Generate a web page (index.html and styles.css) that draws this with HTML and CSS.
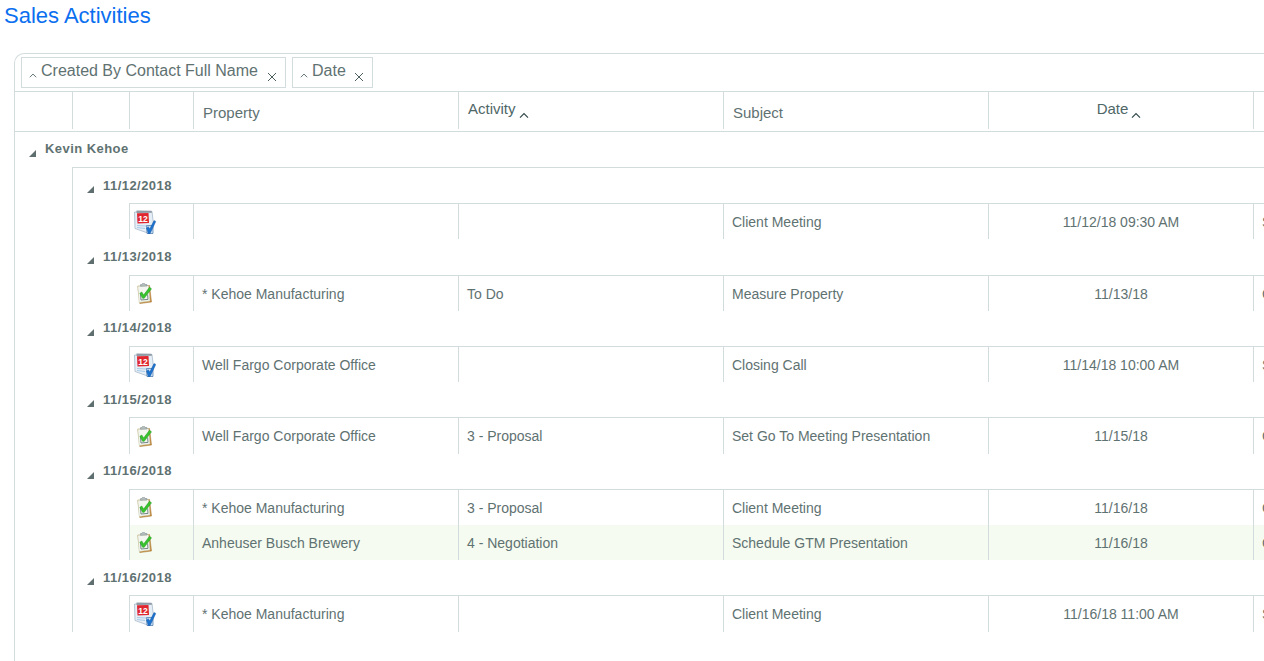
FILE: index.html
```html
<!DOCTYPE html>
<html lang="en">
<head>
<meta charset="utf-8">
<title>Sales Activities</title>
<link rel="stylesheet" href="styles.css">
</head>
<body>
<svg class="defs" width="0" height="0" aria-hidden="true">
  <symbol id="chev" viewBox="0 0 10 6"><path d="M1 5.200 5 1.200l4 4" fill="none" stroke="currentColor" stroke-width="1.200"/></symbol>
  <symbol id="close" viewBox="0 0 10 10"><path d="M1 1l8 8M9 1 1 9" fill="none" stroke="currentColor" stroke-width="1"/></symbol>
  <symbol id="tri" viewBox="0 0 7 7"><path d="M7 0v7H0z" fill="#5f6f6f"/></symbol>
  <symbol id="cal" viewBox="0 0 22 24">
    <path d="M.5 2 18 1.500l1.500 12.500L15 23.500 1 18.500z" fill="#e6eef6" stroke="#9fb2c6" stroke-width=".7"/>
    <path d="M2.500.6 17.500.8 18 2.800 2.500 3z" fill="#8f9aa4"/>
    <path d="M3 3.300 14.500 3l.5 10-11.500.5z" fill="#e0262e"/>
    <text x="9" y="11.600" class="cal-num" text-anchor="middle">12</text>
    <path d="M3 15.500l9 .5M3 17.500l8 1" stroke="#a8cbe8" stroke-width="1"/>
    <path d="M12.500 15.500h6.500v8H13z" fill="#cfe3f5" stroke="#2a5f9e" stroke-width=".6"/>
    <path d="m12.500 18 1.800-1.300 1.400 2.300L20 10.500l1.800.9L16 23.800h-1.600z" fill="#1d74cf" stroke="#124f99" stroke-width=".4"/>
  </symbol>
  <symbol id="clip" viewBox="0 0 15 21">
    <path d="M.8 3.200 12.500 2.500 14.500 19 2.800 20.600z" fill="#c2893a" stroke="#a6752c" stroke-width=".5"/>
    <path d="M.8 3.200 11.500 2.700 13 18 2.200 19.500z" fill="#f3f6ee" stroke="#c9cfb5" stroke-width=".5"/>
    <path d="M3.500 3.300 10 3V1.500H8L7.500.4H5.500L5 1.600H3.500z" fill="#b6c0bd" stroke="#76848a" stroke-width=".5"/>
    <path d="M3.500 11 4 17l7-.6-.4-5" fill="none" stroke="#75868a" stroke-width="1"/>
    <path d="m2.800 10.300 2-1.300L6.600 12 12.500 4.300 14.500 5.800 7.200 15.300H5.600z" fill="#37c22e" stroke="#1d9a1a" stroke-width=".5"/>
  </symbol>
</svg>

<h1 class="title">Sales Activities</h1>

<div class="panel">
  <div class="groupbar">
    <div class="chip">
      <svg class="chip-caret"><use href="#chev"/></svg>
      <span class="chip-label">Created By Contact Full Name</span>
      <svg class="chip-x"><use href="#close"/></svg>
    </div>
    <div class="chip">
      <svg class="chip-caret"><use href="#chev"/></svg>
      <span class="chip-label">Date</span>
      <svg class="chip-x"><use href="#close"/></svg>
    </div>
  </div>

  <div class="head">
    <div class="hcell"></div>
    <div class="hcell"></div>
    <div class="hcell"></div>
    <div class="hcell"><span class="hlabel">Property</span></div>
    <div class="hcell sorted"><span class="hlabel">Activity</span><svg class="sort"><use href="#chev"/></svg></div>
    <div class="hcell"><span class="hlabel">Subject</span></div>
    <div class="hcell sorted center"><span class="hlabel">Date</span><svg class="sort"><use href="#chev"/></svg></div>
    <div class="hcell"></div>
  </div>

  <div class="group1"><svg class="tri"><use href="#tri"/></svg><b>Kevin Kehoe</b></div>

  <div class="nest">
    <div class="group2"><svg class="tri"><use href="#tri"/></svg><b>11/12/2018</b></div>
    <div class="rows">
      <div class="row"><div class="cell icon-cell"><svg class="cal"><use href="#cal"/></svg></div><div class="cell"></div><div class="cell"></div><div class="cell">Client Meeting</div><div class="cell center">11/12/18 09:30 AM</div><div class="cell">S</div></div>
    </div>

    <div class="group2 tall"><svg class="tri"><use href="#tri"/></svg><b>11/13/2018</b></div>
    <div class="rows">
      <div class="row"><div class="cell icon-cell"><svg class="clip"><use href="#clip"/></svg></div><div class="cell">* Kehoe Manufacturing</div><div class="cell">To Do</div><div class="cell">Measure Property</div><div class="cell center">11/13/18</div><div class="cell">C</div></div>
    </div>

    <div class="group2 up"><svg class="tri"><use href="#tri"/></svg><b>11/14/2018</b></div>
    <div class="rows">
      <div class="row"><div class="cell icon-cell"><svg class="cal"><use href="#cal"/></svg></div><div class="cell">Well Fargo Corporate Office</div><div class="cell"></div><div class="cell">Closing Call</div><div class="cell center">11/14/18 10:00 AM</div><div class="cell">S</div></div>
    </div>

    <div class="group2"><svg class="tri"><use href="#tri"/></svg><b>11/15/2018</b></div>
    <div class="rows">
      <div class="row tall"><div class="cell icon-cell"><svg class="clip"><use href="#clip"/></svg></div><div class="cell">Well Fargo Corporate Office</div><div class="cell">3 - Proposal</div><div class="cell">Set Go To Meeting Presentation</div><div class="cell center">11/15/18</div><div class="cell">C</div></div>
    </div>

    <div class="group2 up"><svg class="tri"><use href="#tri"/></svg><b>11/16/2018</b></div>
    <div class="rows">
      <div class="row"><div class="cell icon-cell"><svg class="clip"><use href="#clip"/></svg></div><div class="cell">* Kehoe Manufacturing</div><div class="cell">3 - Proposal</div><div class="cell">Client Meeting</div><div class="cell center">11/16/18</div><div class="cell">C</div></div>
      <div class="row alt"><div class="cell icon-cell"><svg class="clip"><use href="#clip"/></svg></div><div class="cell">Anheuser Busch Brewery</div><div class="cell">4 - Negotiation</div><div class="cell">Schedule GTM Presentation</div><div class="cell center">11/16/18</div><div class="cell">C</div></div>
    </div>

    <div class="group2"><svg class="tri"><use href="#tri"/></svg><b>11/16/2018</b></div>
    <div class="rows">
      <div class="row tall"><div class="cell icon-cell"><svg class="cal"><use href="#cal"/></svg></div><div class="cell">* Kehoe Manufacturing</div><div class="cell"></div><div class="cell">Client Meeting</div><div class="cell center">11/16/18 11:00 AM</div><div class="cell">S</div></div>
    </div>
  </div>
</div>
</body>
</html>
```
FILE: styles.css
```css
* { box-sizing: border-box; }
html, body { margin: 0; height: 661px; overflow: hidden; background: #fff; }
body { font-family: "Liberation Sans", Arial, sans-serif; color: #5f7272; font-size: 14px; }
.defs { position: absolute; }
.title { margin: 0; padding: 3px 0 0 4px; height: 53px; font-size: 22px; line-height: 25px; font-weight: 400; color: #0b6ff0; }
.panel { margin-left: 14px; width: 1290px; height: 640px; border: 1px solid #d3dcdc; border-right: 0; border-bottom: 0; border-top-left-radius: 10px; }
.groupbar { height: 38px; border-bottom: 1px solid #d3dcdc; display: flex; gap: 6px; padding: 3px 0 0 6px; }
.chip { height: 31px; border: 1px solid #d3dcdc; display: flex; position: relative; padding-left: 19px; padding-right: 27px; font-size: 16px; line-height: 26px; }
.chip:last-child { padding-right: 26px; }
.chip-caret { position: absolute; left: 7px; top: 15px; width: 8px; height: 5px; color: #5b6e6e; }
.chip-x { position: absolute; right: 8px; top: 14px; width: 10px; height: 10px; color: #4f5f5f; }
.head { display: grid; grid-template-columns: 58px 57px 64px 265px 265px 265px 265px 1fr; height: 40px; border-bottom: 1px solid #d3dcdc; }
.hcell { position: relative; border-right: 1px solid #d3dcdc; padding: 12px 0 0 9px; font-size: 15px; line-height: 18px; margin-bottom: 2px; }
.hcell:first-child, .hcell:nth-child(2) { padding: 0; }
.hcell:last-child { border-right: 0; }
.sorted { padding-top: 8px; color: #4f6767; }
.sorted.center { text-align: center; padding-left: 0; padding-right: 4px; }
.sort { width: 10px; height: 7px; margin-left: 3px; color: #33484a; vertical-align: -5px; }
.group1 { height: 35px; display: flex; align-items: center; padding-left: 14px; font-size: 13px; letter-spacing: .45px; }
.group2 { height: 35px; display: flex; align-items: center; padding-left: 14px; font-size: 13px; letter-spacing: .45px; }
.group2.tall { height: 36px; padding-bottom: 1px; }
.group1 b { margin-left: 9px; position: relative; top: -1px; }
.group2 b { margin-left: 9px; position: relative; top: 0; }
.group2.up b { top: -1px; }
.tri { width: 7px; height: 7px; margin-top: 8px; }
.nest { margin-left: 57px; height: 465px; border-left: 1px solid #d3dcdc; border-top: 1px solid #d3dcdc; }
.rows { margin-left: 56px; border-top: 1px solid #d3dcdc; }
.row { display: grid; grid-template-columns: 64px 265px 265px 265px 265px 1fr; height: 35px; }
.row.tall { height: 36px; }
.row.alt { background: #f5fbf0; }
.cell { border-left: 1px solid #d3dcdc; padding-left: 8px; line-height: 36px; white-space: nowrap; overflow: hidden; }
.cell.center { text-align: center; padding-left: 0; }
.icon-cell { padding-left: 4px; display: flex; align-items: center; }
.cal { width: 22px; height: 24px; }
.clip { width: 15px; height: 21px; margin-left: 3px; }
.cal-num { font: 700 8.500px "Liberation Sans", Arial, sans-serif; fill: #fff; }
```
